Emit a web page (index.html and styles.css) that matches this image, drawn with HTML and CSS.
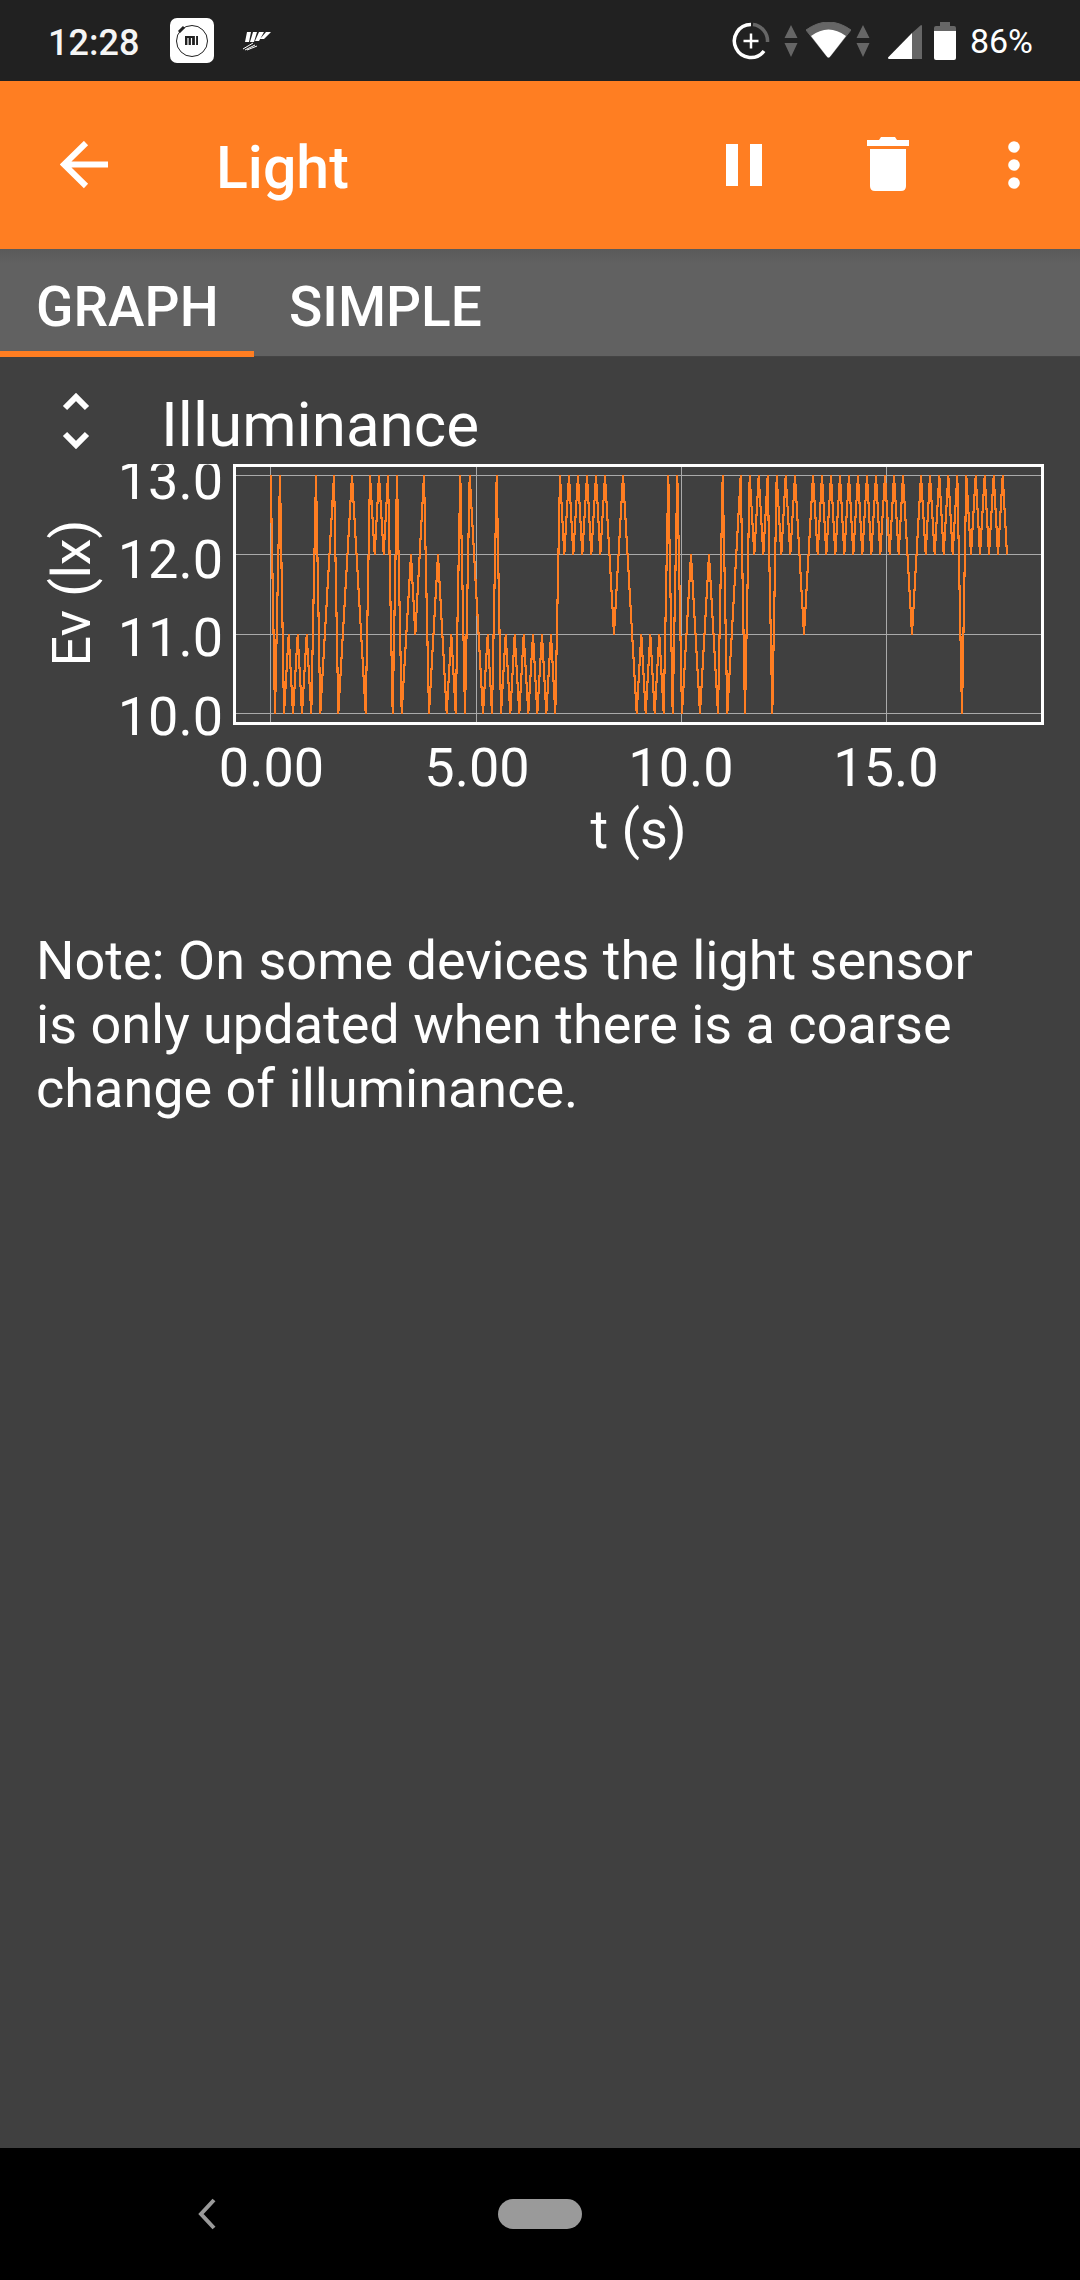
FILE: index.html
```html
<!DOCTYPE html>
<html lang="en">
<head>
<meta charset="utf-8">
<title>Light</title>
<link rel="stylesheet" href="styles.css">
</head>
<body>
<div class="screen">
  <header class="status">
    <div class="status-left">
      <span class="clock">12:28</span>
      <svg class="mi" width="44" height="46" viewBox="0 0 44 46"><rect x="0" y="0" width="44" height="45" rx="7" fill="#fff"/><circle cx="22" cy="23" r="15.500" fill="none" stroke="#212121" stroke-width="1"/><path d="M9 14l5-5" stroke="#212121" stroke-width="3"/><rect x="15" y="18" width="13" height="9" fill="#212121"/><path d="M18 20v7M21.500 20v7M25.500 18v9" stroke="#fff" stroke-width="1.200"/></svg>
      <svg class="feather" width="28" height="20" viewBox="0 0 28 20"><path d="M4 1h4l-2 10H2zM10 1h4l-3 10H7zM16 1h5l-5 9h-4zM23 1h5l-7 7h-4z" fill="#fff"/><path d="M0 18l10-6M2 19l10-5M4 19l10-4" stroke="#fff" stroke-width="1"/></svg>
    </div>
    <div class="status-right">
      <svg class="sync" width="38" height="38" viewBox="0 0 38 38"><path d="M21 2.600A16.500 16.500 0 0 1 35.500 20" fill="none" stroke="#666" stroke-width="3.500"/><path d="M19 2.500A16.500 16.500 0 1 0 32 29" fill="none" stroke="#fff" stroke-width="3.500"/><path d="M19 11.500v15M11.500 19h15" stroke="#fff" stroke-width="2.500"/></svg>
      <svg class="arrows" width="14" height="32" viewBox="0 0 14 32"><path d="M7 0l6.500 13H.5zM.5 18h13L7 32z" fill="#666"/></svg>
      <svg class="wifi" width="45" height="37" viewBox="0 0 45 37"><path d="M0 8Q22.500-8 45 8L24.500 34q-2 3-4 0z" fill="#666" stroke="#666" stroke-linejoin="round"/><path d="M5 14Q22.500 1 40 14L24.500 34q-2 3-4 0z" fill="#fff"/></svg>
      <svg class="arrows arrows-b" width="14" height="32" viewBox="0 0 14 32"><path d="M7 0l6.500 13H.5zM.5 18h13L7 32z" fill="#666"/></svg>
      <svg class="signal" width="34" height="34" viewBox="0 0 34 34"><path d="M33 0a1 1 0 0 1 1 1v33H24V8z" fill="#666"/><path d="M24 8v26H1q-1 0-1-1.500z" fill="#fff"/></svg>
      <svg class="battery" width="22" height="38" viewBox="0 0 22 38"><path d="M6 0h10v4h4q2 0 2 2v4H0V6q0-2 2-2h4z" fill="#666"/><path d="M0 9h22v27q0 2-2 2H2q-2 0-2-2z" fill="#fff"/></svg>
      <span class="percent">86%</span>
    </div>
  </header>

  <nav class="toolbar">
    <svg class="tb-back" width="48" height="48" viewBox="0 0 48 48"><path d="M48 23.500H4M26 2L4 23.500 26 45" fill="none" stroke="#fff" stroke-width="6"/></svg>
    <h1 class="tb-title">Light</h1>
    <svg class="tb-pause" width="36" height="42" viewBox="0 0 36 42"><path d="M0 0h12v42H0zM24 0h12v42H24z" fill="#fff"/></svg>
    <svg class="tb-trash" width="42" height="54" viewBox="0 0 42 54"><path d="M0 3h12l2-3h14l2 3h12v6H0z" fill="#fff"/><path d="M3 12h36v37q0 5-5 5H8q-5 0-5-5z" fill="#fff"/></svg>
    <svg class="tb-more" width="12" height="48" viewBox="0 0 12 48"><circle cx="6" cy="6" r="5.800" fill="#fff"/><circle cx="6" cy="24" r="5.800" fill="#fff"/><circle cx="6" cy="42" r="5.800" fill="#fff"/></svg>
  </nav>

  <div class="tabs">
    <span class="tab tab-active">GRAPH</span>
    <span class="tab">SIMPLE</span>
  </div>

  <main class="content">
    <div class="graph-head">
      <svg class="unfold" width="28" height="56" viewBox="0 0 28 56"><path d="M3 15L14 4l11 11M3 41l11 11 11-11" fill="none" stroke="#fff" stroke-width="6"/></svg>
      <h2 class="graph-title">Illuminance</h2>
    </div>
    <svg class="chart" width="1080" height="410" viewBox="0 464 1080 410">
      <g class="grid">
        <path d="M236 475.500H1041M236 554.500H1041M236 634.500H1041M236 713.500H1041"/>
        <path d="M270.500 466V722M476.500 466V722M681.500 466V722M886.500 466V722"/>
      </g>
      <polyline class="trace" points="270.700,475.500 275,713.500 280,475.500 284,713.500 288.700,634.500 293,713.500 297.700,634.500 302,713.500 306.700,634.500 311.300,713.500 316,475.500 320.300,713.500 334,475.500 338.300,713.500 352,475.500 365.700,713.500 370,475.500 374.700,554.500 379,475.500 383.700,554.500 388,475.500 392.700,713.500 397,475.500 401.700,713.500 411,554.500 415.300,634.500 424,475.500 429,713.500 438,554.500 446.700,713.500 451.300,634.500 455.700,713.500 460.300,475.500 465,713.500 469.700,475.500 483,713.500 487.700,634.500 492,713.500 496.700,475.500 501,713.500 505.700,634.500 510.300,713.500 514.700,634.500 519.300,713.500 523.700,634.500 528.300,713.500 533,634.500 537.300,713.500 542,634.500 546.300,713.500 551,634.500 555.300,713.500 560,475.500 564.300,554.500 569,475.500 573.300,554.500 578,475.500 582.300,554.500 587,475.500 591.300,554.500 596,475.500 600.300,554.500 605,475.500 614,634.500 623,475.500 636.700,713.500 641.300,634.500 645.700,713.500 650.300,634.500 654.700,713.500 659.300,634.500 663.700,713.500 668.300,475.500 672.700,713.500 677.300,475.500 682,713.500 691,554.500 700,713.500 709,554.500 718,713.500 722.700,475.500 727.300,713.500 740.700,475.500 745,713.500 749.700,475.500 754.300,554.500 758.700,475.500 763.300,554.500 767.700,475.500 772.300,713.500 776.700,475.500 781.300,554.500 785.700,475.500 790.300,554.500 795,475.500 804,634.500 813,475.500 817.700,554.500 822,475.500 826.300,554.500 831,475.500 835.300,554.500 840,475.500 844.300,554.500 849,475.500 853.300,554.500 858,475.500 862.300,554.500 867,475.500 871.300,554.500 876,475.500 880.300,554.500 885,475.500 889.700,554.500 894,475.500 898.700,554.500 903,475.500 912,634.500 921,475.500 925.700,554.500 930,475.500 934.700,554.500 939.300,475.500 943.700,554.500 948.300,475.500 952.700,554.500 957.300,475.500 962,713.500 966.300,475.500 971,554.500 975.700,475.500 980,554.500 984.700,475.500 989,554.500 993.700,475.500 998,554.500 1002.700,475.500 1007,554.500"/>
      <rect class="frame" x="234.500" y="465.500" width="808" height="258"/>
      <g class="tick-y">
        <text x="223" y="499">13.0</text>
        <text x="223" y="578">12.0</text>
        <text x="223" y="656">11.0</text>
        <text x="223" y="735">10.0</text>
      </g>
      <g class="tick-x">
        <text x="271.500" y="786">0.00</text>
        <text x="477" y="786">5.00</text>
        <text x="681" y="786">10.0</text>
        <text x="886" y="786">15.0</text>
      </g>
      <text class="axis-label" x="638.500" y="848">t (s)</text>
      <text class="axis-label" transform="translate(90 593) rotate(-90)">Ev (lx)</text>
    </svg>
    <p class="note">Note: On some devices the light sensor is only updated when there is a coarse change of illuminance.</p>
  </main>

  <footer class="navbar">
    <svg class="nav-back" width="20" height="32" viewBox="0 0 20 32"><path d="M17 2L4 16l13 14" fill="none" stroke="#9a9a9a" stroke-width="4"/></svg>
    <span class="nav-pill"></span>
  </footer>
</div>
</body>
</html>
```
FILE: styles.css
```css
* { box-sizing: border-box; }
html, body { margin: 0; padding: 0; }
body { font-family: Roboto, "Noto Sans", sans-serif; color: #fff; background: #404040; }
.screen { width: 1080px; height: 2280px; display: flex; flex-direction: column; overflow: hidden; }

.status { height: 81px; flex: none; background: #212121; display: flex; justify-content: space-between; align-items: center; padding: 0 47px 0 48px; }
.status-left, .status-right { display: flex; align-items: center; }
.clock { font-size: 36px; font-weight: 500; color: #f5f5f5; width: 122px; margin-top: 4px; }
.feather { margin-left: 29px; }
.arrows { margin-left: 14px; }
.wifi { margin-left: 8px; }
.arrows-b { margin-left: 5px; }
.signal { margin-left: 18px; margin-top: 3px; }
.battery { margin-left: 12px; }
.percent { font-size: 34px; margin-left: 14px; font-weight: 400; }

.toolbar { height: 168px; flex: none; background: #ff7e22; display: flex; align-items: center; padding-left: 60px; }
.tb-title { margin: 4px 0 0 108px; font-size: 59px; font-weight: 500; width: 510px; line-height: 1; }
.tb-pause { flex: none; }
.tb-trash { flex: none; margin-left: 105px; margin-top: -3px; }
.tb-more { flex: none; margin-left: 99px; }

.tabs { height: 108px; flex: none; background: linear-gradient(#5a5a5a, #616161 14px); display: flex; box-shadow: inset 0 -1px 0 #444; }
.tab { width: 254px; height: 108px; padding: 28px 0 0 36px; font-size: 55px; line-height: 61px; font-weight: 500; }
.tab-active { border-bottom: 6px solid #ff7e22; }
.tab + .tab { padding-left: 35px; width: auto; }

.content { flex: 1; background: #404040; display: flex; flex-direction: column; }
.graph-head { height: 107px; flex: none; display: flex; align-items: flex-start; padding: 36px 0 0 62px; }
.graph-title { margin: 7px 0 0 71px; font-size: 62px; font-weight: 400; line-height: 50px; }
.unfold { flex: none; }

.chart { display: block; flex: none; }
.grid path { fill: none; stroke: #aaa; stroke-width: 1; }
.trace { fill: none; stroke: #ff7e22; stroke-width: 2.1; shape-rendering: crispEdges; }
.frame { fill: none; stroke: #fff; stroke-width: 3; }
.tick-y text, .tick-x text, .axis-label { font-size: 54px; fill: #fff; }
.tick-y text { text-anchor: end; }
.tick-x text, .axis-label { text-anchor: middle; }

.note { margin: 55px 0 0; padding: 0 36px; font-size: 54px; line-height: 64px; width: 1040px; }

.navbar { height: 132px; flex: none; background: #000; display: flex; align-items: center; padding-left: 197px; }
.nav-back { flex: none; }
.nav-pill { width: 84px; height: 30px; border-radius: 15px; background: #9a9a9a; margin-left: 281px; }
```
